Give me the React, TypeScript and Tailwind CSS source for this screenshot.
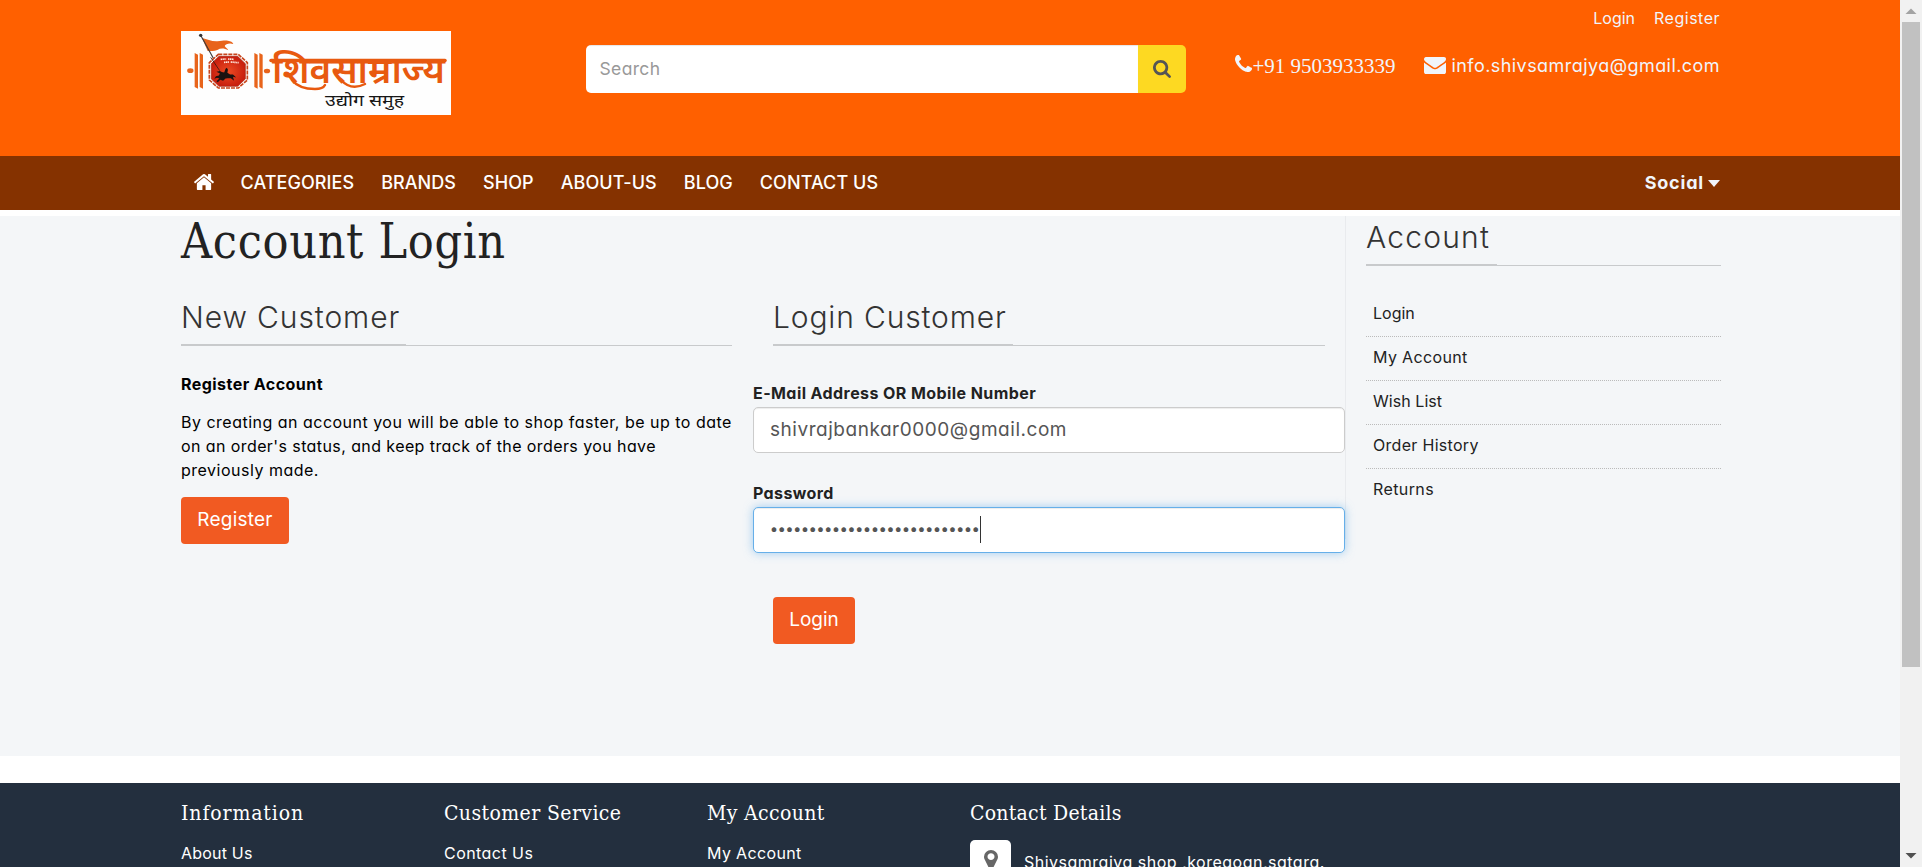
import type { ReactNode } from 'react';

const PHONE =
  'M1600 1240q0 27-10 70.5t-21 68.5q-21 50-122 106-94 51-186 51-27 0-53-3.5t-57.5-12.5-47-14.5-55.5-20.5-49-18q-98-35-175-83-127-79-264-216t-216-264q-48-77-83-175-3-9-18-49t-20.5-55.5-14.5-47-12.5-57.5-3.5-53q0-92 51-186 56-101 106-122 25-11 68.5-21t70.5-10q14 0 21 3 18 6 53 76 11 19 30 54t35 63.5 31 53.5q3 4 17.5 25t21.5 35.5 7 28.5q0 20-28.5 50t-62 55-62 53-28.5 46q0 9 5 22.5t8.5 20.5 14 24 11.5 19q76 137 174 235t235 174q2 1 19 11.5t24 14 20.5 8.5 22.5 5q18 0 46-28.5t53-62 55-62 50-28.5q14 0 28.5 7t35.5 21.5 25 17.5q25 15 53.5 31t63.5 35 54 30q70 35 76 53 3 7 3 21z';
const ENVELOPE =
  'M1792 710v794q0 66-47 113t-113 47h-1472q-66 0-113-47t-47-113v-794q44 49 101 87 362 246 497 345 57 42 92.5 65.5t94.5 48 110 24.5h2q51 0 110-24.5t94.5-48 92.5-65.5q170-123 498-345 57-39 100-87zm0-294q0 79-49 151t-122 123q-376 261-468 325-10 7-42.5 31t-54 38.5-52 32.5-57.5 27-50 9h-2q-23 0-50-9t-57.5-27-52-32.5-54-38.5-42.5-31q-91-64-262-182.5t-205-142.5q-62-42-117-115.5t-55-136.5q0-78 41.5-130t118.5-52h1472q65 0 112.5 47t47.5 113z';
const HOME =
  'M1472 992v480q0 26-19 45t-45 19h-384v-384h-256v384h-384q-26 0-45-19t-19-45v-480q0-1 .5-3t.5-3l575-474 575 474q1 2 1 6zm223-69l-62 74q-8 9-21 11h-3q-13 0-21-7l-692-577-692 577q-12 8-24 7-13-2-21-11l-62-74q-8-10-7-23.5t11-21.5l719-599q32-26 76-26t76 26l244 204v-195q0-14 9-23t23-9h192q14 0 23 9t9 23v408l219 182q10 8 11 21.5t-7 23.5z';
const SEARCH =
  'M1216 832q0-185-131.5-316.5t-316.5-131.5-316.5 131.5-131.5 316.5 131.5 316.5 316.5 131.5 316.5-131.5 131.5-316.5zm512 832q0 52-38 90t-90 38q-54 0-90-38l-343-342q-179 124-399 124-143 0-273.5-55.5t-225-150-150-225-55.5-273.5 55.5-273.5 150-225 225-150 273.5-55.5 273.5 55.5 225 150 150 225 55.5 273.5q0 220-124 399l343 343q37 37 37 90z';
const MARKER =
  'M1152 640q0-106-75-181t-181-75-181 75-75 181 75 181 181 75 181-75 75-181zm256 0q0 109-33 179l-364 774q-16 33-47.5 52t-67.5 19-67.5-19-46.5-52l-365-774q-33-70-33-179 0-212 150-362t362-150 362 150 150 362z';

function Icon({ d, box, className }: { d: string; box: string; className: string }) {
  return (
    <svg viewBox={box} className={className} preserveAspectRatio="none" fill="currentColor" aria-hidden="true">
      <path d={d} />
    </svg>
  );
}

function Logo() {
  return (
    <svg viewBox="0 0 270 84" className="mt-[31px] h-[84px] w-[270px] shrink-0 bg-[#fefefe]">
      <defs>
        <radialGradient id="seal">
          <stop offset="0" stopColor="#ec4a22" />
          <stop offset="1" stopColor="#c9200f" />
        </radialGradient>
      </defs>
      <g transform="translate(-3 -3) scale(0.33333)">
        <g fill="#e8641b">
          <ellipse cx="37" cy="128" rx="9.500" ry="7" />
          <path d="M50 75l10 5v102l-10-5zM65 75l10 5v102l-10-5z" />
          <path d="M229 75l10 5v102l-10-5zM244 75l10 5v102l-10-5z" />
          <ellipse cx="267" cy="129" rx="9.500" ry="7" />
          <path d="M72 30C88 33 100 41 118 40C134 38 140 36 150 38C158 39 164 42 166 48C156 44 142 47 140 54C143 60 150 62 151 67C138 60 128 60 118 66C108 70 98 68 89 69Z" />
        </g>
        <path d="M68 22L111 100" stroke="#3b3b3b" strokeWidth="3.500" />
        <circle cx="68" cy="22" r="5" fill="#333" />
        <path d="M121 79H181L208 104V156L181 180H121L94 156V104Z" fill="#fff" stroke="#c8451c" strokeWidth="5" strokeDasharray="12 3" />
        <path d="M123 85H179L202 107V153L179 175H123L100 153V107Z" fill="url(#seal)" stroke="#a3200e" strokeWidth="2" />
        <path d="M128 94l17-1M150 93l18 1M138 103l16-1M158 102l24 2" stroke="#ffe8dd" strokeWidth="5" strokeDasharray="4 1.500" />
        <path d="M98 88L125 128" stroke="#3b1a10" strokeWidth="2.500" />
        <g transform="translate(29 29) scale(0.8)">
          <path d="M108 128L121 125L128 129L137 131L142 117L147 113L151 120L149 132L159 138L170 138L182 149L170 147L174 162L162 152L151 152L142 153L133 162L122 158L113 167L108 163L119 153L110 150L100 154L106 145L117 142L121 134Z" fill="#1b1210" />
        </g>
      </g>
      <g fill="none" stroke="#e8590f" strokeLinecap="round">
        <path d="M90 29.500H264" strokeWidth="3.500" />
        <path d="M111 49Q118 58 134 58Q142 58 144 54" strokeWidth="2.500" />
        <path d="M160 49Q170 60 184 53" strokeWidth="2.500" />
      </g>
      <text x="91" y="52" textLength="173" lengthAdjust="spacingAndGlyphs" fill="#e8590f" className="[font-family:'Noto_Sans',sans-serif] text-[36px] font-semibold">
        शिवसाम्राज्य
      </text>
      <text x="144" y="75" textLength="79" lengthAdjust="spacingAndGlyphs" fill="#161616" className="[font-family:'Noto_Sans',sans-serif] text-[15.5px]">
        उद्योग समुह
      </text>
    </svg>
  );
}

function Heading({ children, className }: { children: ReactNode; className: string }) {
  return (
    <div className="border-b border-[#c8cacc]">
      <h2 className={`border-b border-[#c8cacc] text-[30px] font-light whitespace-nowrap text-[#333] ${className}`}>{children}</h2>
    </div>
  );
}

function FooterColumn({ title, tracking, children }: { title: string; tracking: string; children: ReactNode }) {
  return (
    <div className="w-[263px] shrink-0">
      <h3 className={`[font-family:'DejaVu_Serif_Condensed','DejaVu_Serif',serif] text-[21px] leading-10 whitespace-nowrap ${tracking}`}>{title}</h3>
      {children}
    </div>
  );
}

const NAV = ['CATEGORIES', 'BRANDS', 'SHOP', 'ABOUT-US', 'BLOG', 'CONTACT US'];
const ACCOUNT = [
  { label: 'Login', tracking: '' },
  { label: 'My Account', tracking: 'tracking-[0.35px]' },
  { label: 'Wish List', tracking: 'tracking-[0.05px]' },
  { label: 'Order History', tracking: 'tracking-[0.3px]' },
  { label: 'Returns', tracking: 'tracking-[0.4px]' },
];

export default function App() {
  return (
    <div className="flex h-[867px] w-[1922px] overflow-hidden bg-white [font-family:Inter,sans-serif] text-base [font-feature-settings:'cv11']">
      <div className="w-[1900px] shrink-0">
        <header className="flex h-[156px] items-start bg-[#ff6000] pr-[180px] pl-[181px]">
          <Logo />
          <form className="mt-[45px] ml-[135px] flex h-12 w-[600px] overflow-hidden rounded-[5px]">
            <div className="flex flex-1 items-center bg-white pl-[13.5px] text-[17.5px] tracking-[0.35px] text-[#999] shadow-[inset_0_1px_1px_rgba(0,0,0,0.1)]">Search</div>
            <div className="flex w-12 items-center justify-center bg-[#fdd922] text-[#555]">
              <Icon d={SEARCH} box="64 128 1664 1664" className="h-[18px] w-[18px]" />
            </div>
          </form>
          <div className="ml-auto flex flex-col items-end text-[#f1f5fb]">
            <div className="flex gap-[19px] leading-9">
              <a>Login</a>
              <a className="tracking-[0.5px]">Register</a>
            </div>
            <div className="mt-[9px] flex h-[41px] items-center">
              <Icon d={PHONE} box="192 128 1408 1408" className="mb-1 h-[17px] w-[17px]" />
              <span className="[font-family:'Liberation_Serif',serif] text-[21px] leading-10">+91 9503933339</span>
              <Icon d={ENVELOPE} box="0 256 1792 1408" className="ml-[29px] h-[17px] w-[22px]" />
              <span className="ml-[5px] text-lg leading-10 tracking-[0.44px]">info.shivsamrajya@gmail.com</span>
            </div>
          </div>
        </header>

        <nav className="flex h-[54px] items-center bg-[#853200] pr-[180px] pl-[194px] text-lg font-medium text-white">
          <Icon d={HOME} box="89 253 1614 1283" className="mb-0.5 h-4 w-5" />
          <div className="ml-[26.5px] flex gap-[27px] tracking-[0.07px]">
            {NAV.map((item) => (
              <a key={item}>{item}</a>
            ))}
          </div>
          <div className="ml-auto flex items-center gap-1 font-bold text-[#f1f5fb]">
            <span className="tracking-[0.8px]">Social</span>
            <svg viewBox="0 0 12 7" className="h-[7px] w-3" fill="currentColor">
              <path d="M0 0h12l-6 7z" />
            </svg>
          </div>
        </nav>

        <main className="mt-1.5 flex h-[540px] items-start bg-[#f4f6f8] pl-[181px]">
          <div className="h-[323px] w-[1165px] shrink-0 border-r border-[#e9ebee]">
            <h1 className="[font-family:'DejaVu_Serif_Condensed','DejaVu_Serif',serif] text-[48px] leading-[51px] tracking-[0.65px] whitespace-nowrap text-[#222]">Account Login</h1>
            <div className="mt-[26px] flex">
              <section className="w-[551px] shrink-0">
                <Heading className="w-[225px] pb-[3px] leading-[48px] tracking-[0.9px]">New Customer</Heading>
                <p className="mt-[26px] leading-6 font-bold tracking-[0.45px] text-black">Register Account</p>
                <p className="mt-3.5 leading-6 whitespace-nowrap text-black">
                  <span className="block tracking-[0.49px]">By creating an account you will be able to shop faster, be up to date</span>
                  <span className="block tracking-[0.41px]">on an order's status, and keep track of the orders you have</span>
                  <span className="block tracking-[0.5px]">previously made.</span>
                </p>
                <button className="mt-[15px] h-[47px] w-[108px] rounded bg-[#f15a22] text-[19px] tracking-[0.24px] text-white">Register</button>
              </section>
              <section className="ml-[21px] w-[592px] shrink-0">
                <div className="px-5">
                  <Heading className="w-60 pb-[3px] leading-[48px] tracking-[0.85px]">Login Customer</Heading>
                </div>
                <label className="mt-[35px] block leading-6 font-bold tracking-[0.42px] text-[#222]">E-Mail Address OR Mobile Number</label>
                <div className="mt-0.5 flex h-[46px] items-center rounded-[5px] border border-[#ccc] bg-white pl-4 text-[19px] tracking-[0.53px] text-[#555] shadow-[inset_0_1px_1px_rgba(0,0,0,0.075)]">
                  shivrajbankar0000@gmail.com
                </div>
                <label className="mt-7 block leading-6 font-bold tracking-[0.38px] text-[#222]">Password</label>
                <div className="mt-0.5 flex h-[46px] items-center rounded-[5px] border border-[#66afe9] bg-white pl-4 text-[15px] text-[#555] shadow-[inset_0_1px_1px_rgba(0,0,0,0.075),0_0_10px_rgba(102,175,233,0.6)]">
                  {Array.from({ length: 27 }, (_, i) => (
                    <span key={i} className="mb-px flex w-[7.78px] justify-center">
                      •
                    </span>
                  ))}
                  <span className="mb-px h-[27px] w-px bg-[#333]" />
                </div>
                <button className="mt-11 ml-5 h-[47px] w-[82px] rounded bg-[#f15a22] text-[19px] text-white">Login</button>
              </section>
            </div>
          </div>
          <aside className="ml-5 w-[355px] shrink-0">
            <Heading className="w-[131px] pb-1.5 leading-[42px] tracking-[1.2px]">Account</Heading>
            <ul className="mt-[27px] text-[#222]">
              {ACCOUNT.map(({ label, tracking }) => (
                <li key={label} className={`border-b border-dotted border-[#bbb] pb-[3px] pl-[7px] leading-10 last:border-transparent ${tracking}`}>
                  {label}
                </li>
              ))}
            </ul>
          </aside>
        </main>

        <footer className="mt-[27px] flex h-[84px] overflow-hidden bg-[#232f3e] pt-[10px] pl-[181px] text-white">
          <FooterColumn title="Information" tracking="tracking-[0.88px]">
            <a className="block leading-[41px] tracking-[0.2px]">About Us</a>
          </FooterColumn>
          <FooterColumn title="Customer Service" tracking="tracking-[0.4px]">
            <a className="block leading-[41px] tracking-[0.45px]">Contact Us</a>
          </FooterColumn>
          <FooterColumn title="My Account" tracking="tracking-[0.35px]">
            <a className="block leading-[41px] tracking-[0.35px]">My Account</a>
          </FooterColumn>
          <FooterColumn title="Contact Details" tracking="tracking-[0.25px]">
            <div className="mt-[7px] flex h-11 items-center">
              <span className="flex h-11 w-[41px] shrink-0 justify-center rounded-[5px] bg-white pt-[10px] text-[#666]">
                <Icon d={MARKER} box="384 128 1024 1536" className="h-5 w-3.5" />
              </span>
              <span className="ml-[13px] tracking-[0.5px] whitespace-nowrap">Shivsamrajya shop ,koregoan,satara.</span>
            </div>
          </FooterColumn>
        </footer>
      </div>

      <div className="flex w-[22px] shrink-0 flex-col items-center bg-[#f1f1f1]">
        <svg viewBox="0 0 22 22" className="h-[22px] w-[22px] shrink-0">
          <path d="M5.500 14L11 8.500L16.500 14Z" fill="#a3a3a3" />
        </svg>
        <div className="h-[645px] w-[18px] shrink-0 bg-[#c1c1c1]" />
        <svg viewBox="0 0 22 22" className="mt-auto h-[22px] w-[22px] shrink-0">
          <path d="M5.500 8L11 13.500L16.500 8Z" fill="#505050" />
        </svg>
      </div>
    </div>
  );
}
